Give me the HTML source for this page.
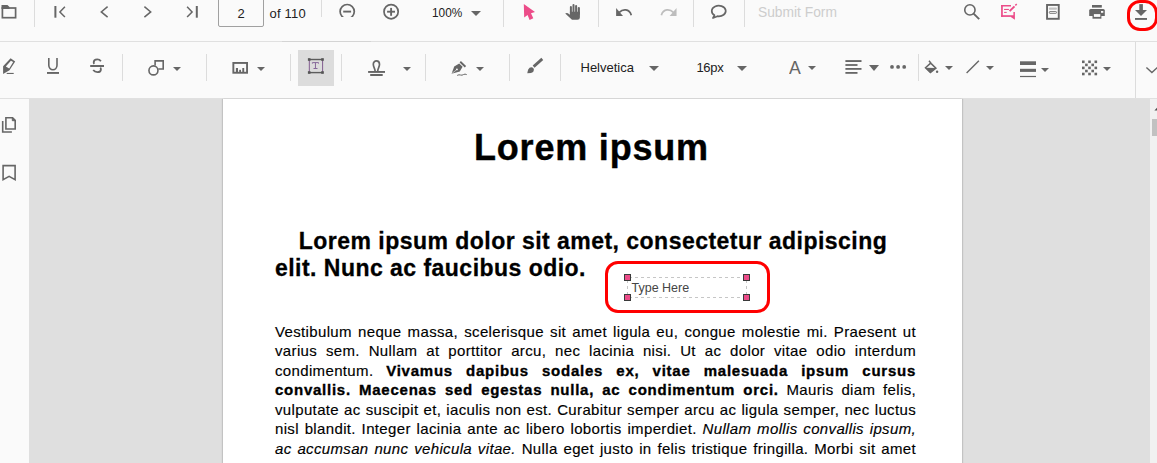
<!DOCTYPE html>
<html><head><meta charset="utf-8">
<style>
html,body{margin:0;padding:0;}
body{width:1157px;height:463px;overflow:hidden;position:relative;background:#fafafa;font-family:"Liberation Sans",sans-serif;}
.a{position:absolute;}
.sep{position:absolute;width:1px;background:#dcdcdc;}
.hl{position:absolute;height:1px;background:#e0e0e0;}
svg{position:absolute;overflow:visible;}
.car{position:absolute;width:0;height:0;border-left:5.5px solid transparent;border-right:5.5px solid transparent;border-top:5.5px solid #666;}
.cars{position:absolute;width:0;height:0;border-left:4.2px solid transparent;border-right:4.2px solid transparent;border-top:4.4px solid #666;}
.tt{position:absolute;white-space:nowrap;color:#212121;font-size:13px;line-height:1;}
#page{position:absolute;left:223px;top:99px;width:739px;height:364px;background:#fff;box-shadow:-1px 0 1px rgba(0,0,0,0.12),1px 0 1px rgba(0,0,0,0.12);}
.pl{position:absolute;left:275px;width:641px;white-space:nowrap;font-size:15px;line-height:19.5px;letter-spacing:0.35px;-webkit-text-stroke:0.15px #000;color:#000;text-align:justify;text-align-last:justify;}
.pl b{letter-spacing:0.75px;-webkit-text-stroke:0.35px #000;}
.pl i{letter-spacing:0.35px;}
</style></head><body>

<!-- toolbar 1 -->
<div class="hl" style="left:0;top:41px;width:1157px;"></div>
<div class="hl" style="left:282px;top:41px;width:89px;background:#d4d4d4;"></div>
<div class="hl" style="left:0;top:98px;width:1157px;"></div>

<svg width="1157" height="463" style="left:0;top:0;" viewBox="0 0 1157 463">
<defs><clipPath id="c17"><rect x="0" y="0" width="1157" height="17"/></clipPath></defs>
<g fill="none" stroke="#666666" stroke-width="1.8">
 <!-- folder -->
 <rect x="2.4" y="8" width="13.2" height="9.7" stroke-width="1.7"/>
 <path d="M1.5,5 H7.5 L9.5,7 V9 H1.5 Z" fill="#666666" stroke="none"/>
 <!-- first -->
 <rect x="54.4" y="6" width="2" height="11.7" fill="#666666" stroke="none"/>
 <polyline points="64.9,6.7 59.9,11.9 64.9,17.1" stroke-width="1.5"/>
 <polyline points="107.6,6.7 101.3,11.9 107.6,17.1" stroke-width="1.5"/>
 <polyline points="144.4,6.7 150.7,11.9 144.4,17.1" stroke-width="1.5"/>
 <polyline points="187.1,6.7 192.1,11.9 187.1,17.1" stroke-width="1.5"/>
 <rect x="195.8" y="6" width="2" height="11.7" fill="#666666" stroke="none"/>
 <!-- zoom out (clipped) -->
 <g clip-path="url(#c17)">
  <circle cx="347.2" cy="11.6" r="7.1" stroke-width="1.7"/>
  <line x1="343.2" y1="11.6" x2="351.1" y2="11.6" stroke-width="1.9"/>
 </g>
 <circle cx="391.1" cy="11.7" r="7.1" stroke-width="1.7"/>
 <line x1="387.1" y1="11.7" x2="395" y2="11.7" stroke-width="1.9"/>
 <line x1="391.1" y1="7.9" x2="391.1" y2="15.8" stroke-width="1.9"/>
 <!-- hand -->
 <g fill="#666666" stroke="none">
  <rect x="569.9" y="6.1" width="2" height="8" rx="1"/>
  <rect x="572.5" y="3.9" width="2" height="10" rx="1"/>
  <rect x="575.1" y="4.9" width="2" height="10" rx="1"/>
  <rect x="577.7" y="7" width="2.2" height="8" rx="1.1"/>
  <path d="M569.9,11.7 H579.9 V17.4 Q579.9,19.8 577.5,19.8 H572 L565.2,13.6 Q566.4,12.5 567.9,13.3 L569.9,14.7 Z"/>
 </g>
 <!-- undo / redo -->
 <g id="undo">
  <polygon points="616.1,8.1 616.1,15.9 623,15.9" fill="#666666" stroke="none"/>
  <path d="M619.3,12.4 C622.6,8.9 629.3,8.4 631.3,15.2" stroke-width="1.7"/>
 </g>
 <g transform="matrix(-1,0,0,1,1292.65,0)" stroke="#bdbdbd">
  <polygon points="616.1,8.1 616.1,15.9 623,15.9" fill="#bdbdbd" stroke="none"/>
  <path d="M619.3,12.4 C622.6,8.9 629.3,8.4 631.3,15.2" stroke-width="1.7"/>
 </g>
 <!-- comment -->
 <path d="M714.5,15.2 A7,5.3 0 1 1 717.5,16.2 L713,18 Z" stroke-width="1.7" stroke-linejoin="round"/>
 <!-- search -->
 <circle cx="969.9" cy="9.9" r="5.15" stroke-width="1.6"/>
 <line x1="973.6" y1="13.6" x2="979.2" y2="19.2" stroke-width="1.9"/>
 <!-- form -->
 <rect x="1047.05" y="4.95" width="11.7" height="13.85" stroke-width="1.9"/>
 <rect x="1048.9" y="7.4" width="8" height="2.4" rx="0.8" fill="#c2c2c2" stroke="none"/>
 <rect x="1049.35" y="11.55" width="7.1" height="1.8" rx="0.6" fill="#fafafa" stroke="#707070" stroke-width="0.9"/>
 <!-- print -->
 <g fill="#666666" stroke="none">
  <rect x="1092" y="5" width="9.8" height="2.6"/>
  <path d="M1090.7,9.1 H1103.3 Q1104.8,9.1 1104.8,10.6 V15.9 H1089.2 V10.6 Q1089.2,9.1 1090.7,9.1 Z"/>
  <rect x="1092.5" y="13" width="8.9" height="5.7"/>
  <rect x="1093.9" y="14.1" width="6.4" height="2.8" fill="#fafafa"/>
  <rect x="1101" y="11" width="2.3" height="1.8" fill="#fafafa"/>
 </g>
 <!-- download -->
 <g fill="#666666" stroke="none">
  <rect x="1139.3" y="4.1" width="3.6" height="6.2"/>
  <polygon points="1135,10.1 1147,10.1 1141,16"/>
  <rect x="1135" y="18" width="12" height="1.9"/>
 </g>
</g>
<!-- pink icons -->
<g fill="#ec4c89" stroke="none">
 <polygon points="523.8,3.9 535,12.1 531,13.2 533.3,18.2 529.6,19.9 527.6,15 524.2,17.5"/>
</g>
<g fill="#ec4c89" stroke="none">
 <rect x="1001.1" y="5" width="9.9" height="1.5"/>
 <rect x="1001.1" y="5" width="1.7" height="11.9"/>
 <rect x="1001.1" y="15.2" width="9.8" height="1.7"/>
 <polygon points="1010.8,15.2 1013.4,15.2 1013.4,12.1 1014.9,12.1 1014.9,19.7 1010.8,16.9"/>
 <rect x="1004.1" y="8.9" width="4.8" height="1.1"/>
 <rect x="1004.1" y="11.9" width="2.6" height="1"/>
 <line x1="1009.6" y1="11.1" x2="1014.5" y2="6.4" stroke="#ec4c89" stroke-width="2"/>
 <line x1="1015.3" y1="5.3" x2="1016.8" y2="4.1" stroke="#ec4c89" stroke-width="1.5"/>
</g>
</svg>

<div class="sep" style="left:34px;top:0;height:27px;"></div>
<div class="a" style="left:218px;top:-5px;width:44px;height:30px;border:1px solid #a0a0a0;border-radius:2px;"></div>
<div class="tt" style="left:237.5px;top:7px;">2</div>
<div class="a" style="left:260px;top:0;width:60px;height:18px;overflow:hidden;"><div class="tt" style="left:9.5px;top:6.6px;letter-spacing:0.2px;">of 110</div></div>
<div class="sep" style="left:321px;top:0;height:17px;"></div>
<div class="tt" style="left:432px;top:6px;font-size:13px;transform:scaleX(0.91);transform-origin:0 0;">100%</div>
<div class="car" style="left:470.5px;top:11px;"></div>
<div class="sep" style="left:503px;top:0;height:27px;"></div>
<div class="sep" style="left:598px;top:0;height:27px;"></div>
<div class="sep" style="left:693px;top:0;height:27px;"></div>
<div class="sep" style="left:744px;top:0;height:27px;"></div>
<div class="tt" style="left:758.2px;top:5px;font-size:14px;color:#cdcdcd;transform:scaleX(0.985);transform-origin:0 0;">Submit Form</div>
<div class="a" style="left:1127px;top:0;width:31px;height:31px;box-sizing:border-box;border:3px solid #f00;border-radius:13px;"></div>


<div class="a" style="left:298px;top:50px;width:36px;height:36px;background:#dcdcdc;"></div>
<div class="sep" style="left:122px;top:54px;height:27px;"></div>
<div class="sep" style="left:206px;top:54px;height:27px;"></div>
<div class="sep" style="left:290px;top:54px;height:27px;"></div>
<div class="sep" style="left:341px;top:54px;height:27px;"></div>
<div class="sep" style="left:425px;top:54px;height:27px;"></div>
<div class="sep" style="left:509px;top:54px;height:27px;"></div>
<div class="sep" style="left:560px;top:54px;height:27px;"></div>
<div class="sep" style="left:918px;top:54px;height:27px;"></div>
<div class="sep" style="left:1135px;top:42px;height:56px;"></div>
<div class="cars" style="left:173.3px;top:66.5px;"></div>
<div class="cars" style="left:257.2px;top:67.0px;"></div>
<div class="cars" style="left:402.8px;top:66.8px;"></div>
<div class="cars" style="left:476.3px;top:66.8px;"></div>
<div class="tt" style="left:580.5px;top:61px;">Helvetica</div>
<div class="car" style="left:648.7px;top:65.8px;"></div>
<div class="tt" style="left:696.4px;top:61.3px;letter-spacing:-0.3px;">16px</div>
<div class="car" style="left:736.5px;top:65.8px;"></div>
<div class="tt" style="left:789px;top:57.8px;font-size:19px;color:#666;transform:scaleX(0.93);transform-origin:0 0;">A</div>
<div class="cars" style="left:807.5px;top:65.8px;"></div>
<div class="a" style="left:869.3px;top:64.7px;width:0;height:0;border-left:5.5px solid transparent;border-right:5.5px solid transparent;border-top:6.3px solid #666;"></div>
<div class="cars" style="left:944.5px;top:65.8px;"></div>
<div class="cars" style="left:985.5px;top:65.8px;"></div>
<div class="cars" style="left:1040.6px;top:67.5px;"></div>
<div class="cars" style="left:1102.5px;top:66.9px;"></div>
<svg width="1157" height="463" style="left:0;top:0;" viewBox="0 0 1157 463">
<g fill="none" stroke="#666666" stroke-width="1.6">
 <!-- highlight -->
 <path d="M3.1,66.2 L10.6,58.3 L15.2,61.5 L9.5,70.3 L3.1,73.9 Z M5.8,66.6 L10.9,60.7 L13.2,62.1 L9.2,68.6 Z" fill="#666666" fill-rule="evenodd" stroke="none"/>
 <rect x="6.7" y="72.9" width="7" height="1.1" fill="#666666" stroke="none"/>
 <!-- underline -->
 <path d="M48.8,57.9 V65.3 A4.1,4.5 0 0 0 57,65.3 V57.9"/>
 <rect x="47" y="72" width="12" height="1.9" fill="#666666" stroke="none"/>
 <!-- strikethrough -->
 <path d="M100.9,61.2 Q99.6,59.4 97.3,59.4 Q93.7,59.4 93.7,62.3 Q93.7,63.3 94.3,63.9" stroke-width="1.8"/>
 <path d="M93.2,70 Q94.7,72.1 97.4,72.1 Q100.9,72.1 100.9,69.4 Q100.9,68.3 100.3,67.7" stroke-width="1.8"/>
 <rect x="90.2" y="65" width="13.8" height="2" fill="#666666" stroke="none"/>
 <!-- shape -->
 <circle cx="153.45" cy="70.4" r="4.5"/>
 <path d="M155.1,65.6 V60.9 H163.2 V69 H158.3"/>
 <!-- measure -->
 <rect x="233.35" y="62.95" width="13.7" height="9.8" stroke-width="1.9"/>
 <g fill="#666666" stroke="none"><rect x="235.9" y="68" width="2.1" height="5"/><rect x="239.2" y="69.8" width="1.8" height="3.2"/><rect x="242.3" y="68" width="1.9" height="5"/></g>
 <!-- free text -->
 <g stroke="none">
  <rect x="308.6" y="58.8" width="14.6" height="1.4" fill="#5c5c5c"/>
  <rect x="308.6" y="71.9" width="14.6" height="1.4" fill="#5c5c5c"/>
  <rect x="308.8" y="59" width="1.1" height="14" fill="#8a6896"/>
  <rect x="322" y="59" width="1.1" height="14" fill="#8a6896"/>
  <rect x="307.9" y="58.2" width="2.6" height="2.6" fill="#555"/>
  <rect x="321.2" y="58.2" width="2.6" height="2.6" fill="#555"/>
  <rect x="307.9" y="71.2" width="2.6" height="2.6" fill="#555"/>
  <rect x="321.2" y="71.2" width="2.6" height="2.6" fill="#555"/>
 </g>
 <path d="M312.4,63.6 V62.6 H318.5 V63.6 M315.45,62.6 V68.4 M313.5,68.5 H317.5" stroke-width="1" stroke="#86689a"/>
 <!-- stamp -->
 <path d="M375.1,71 C375,68.3 373.3,67.2 373.3,64.3 C373.3,62.2 374.7,60.9 376.4,60.9 C378.1,60.9 379.5,62.2 379.5,64.3 C379.5,67.2 377.8,68.3 377.7,71" stroke-width="1.7"/>
 <rect x="368.1" y="71" width="16.9" height="1.9" fill="#666666" stroke="none"/>
 <rect x="370.2" y="74" width="12.5" height="2" fill="#666666" stroke="none"/>
 <!-- signature -->
 <g fill="#666666" stroke="none">
  <path d="M451.6,73.8 L454.2,66.6 L459.2,63.4 L462.6,66.8 L459.8,71.4 Z"/>
  <path d="M459.6,62.4 L460.9,61.1 L466.1,66.1 L464.8,67.4 Z"/>
 </g>
 <circle cx="456.9" cy="69.4" r="0.95" fill="#fafafa" stroke="none"/>
 <line x1="456.3" y1="70" x2="452.2" y2="73.2" stroke="#fafafa" stroke-width="0.6"/>
 <path d="M457.2,75.4 Q459,74.4 460.5,75 Q462,75.6 463.6,74.5 Q465,73.7 466.7,74.6" stroke-width="1"/>
 <!-- brush -->
 <line x1="533.6" y1="66.6" x2="542.3" y2="58.9" stroke-width="2.8"/>
 <path d="M527.3,73.3 Q527.6,71.3 528.3,69.6 Q529.3,67.3 531.3,67.3 Q533.9,67.5 533.9,70.1 Q533.8,72.6 531,73.1 Z" fill="#666666" stroke="none"/>
 <!-- align -->
 <g fill="#666666" stroke="none">
  <rect x="845.4" y="60.1" width="16.1" height="1.9"/>
  <rect x="845.4" y="64.1" width="12.1" height="1.8"/>
  <rect x="845.4" y="68" width="16.1" height="1.8"/>
  <rect x="845.4" y="72" width="12.1" height="1.8"/>
  <circle cx="892" cy="66.9" r="1.9"/>
  <circle cx="898.1" cy="66.9" r="1.9"/>
  <circle cx="904.2" cy="66.9" r="1.9"/>
 </g>
 <!-- fill -->
 <path d="M930.7,63.1 L935.9,68.1 L930.4,72.6 L925.5,67.8 Z M929,60.8 L931.2,63.4" stroke-width="1.5"/>
 <path d="M925.5,67.8 L935.9,68.1 L930.4,72.9 Z" fill="#666666" stroke="none"/>
 <circle cx="937.1" cy="71.8" r="1.2" fill="#666666" stroke="none"/>
 <!-- line -->
 <line x1="966.6" y1="72.9" x2="978.9" y2="60.8" stroke-width="1.4"/>
 <!-- thickness -->
 <g fill="#666666" stroke="none">
  <rect x="1020" y="61.3" width="16" height="3.7"/>
  <rect x="1020" y="68.8" width="16" height="3.1"/>
  <rect x="1020" y="75.9" width="16" height="1.2"/>
 </g>
 <!-- opacity -->
 <g fill="#666666" stroke="none" id="chk">
  <rect x="1082" y="60.5" width="2.6" height="2.6"/><rect x="1088.2" y="60.5" width="2.6" height="2.6"/><rect x="1094.5" y="60.5" width="2.6" height="2.6"/>
  <rect x="1085.1" y="63.6" width="2.6" height="2.6"/><rect x="1091.4" y="63.6" width="2.6" height="2.6"/>
  <rect x="1082" y="66.6" width="2.6" height="2.6"/><rect x="1088.2" y="66.6" width="2.6" height="2.6"/><rect x="1094.5" y="66.6" width="2.6" height="2.6"/>
  <rect x="1085.1" y="69.7" width="2.6" height="2.6"/><rect x="1091.4" y="69.7" width="2.6" height="2.6"/>
  <rect x="1082" y="72.7" width="2.6" height="2.6"/><rect x="1088.2" y="72.7" width="2.6" height="2.6"/><rect x="1094.5" y="72.7" width="2.6" height="2.6"/>
 </g>
 <!-- chevron -->
 <polyline points="1146.4,67.4 1151.9,72.6 1157.4,67.4" stroke-width="1.4"/>
 <!-- sidebar icons -->
 <path d="M5.9,117.8 H12.6 L15.2,120.4 V129 H5.9 Z"/>
 <path d="M12.3,117.8 V120.7 H15.2" fill="#666666" stroke-width="1"/>
 <path d="M2.7,121 V132 H11.9"/>
 <path d="M3.1,165.6 H15.1 V179.6 L9.1,176.3 L3.1,179.6 Z" stroke-linejoin="miter"/>
</g>

</svg>


<!-- sidebar / viewer -->
<div class="a" style="left:29px;top:99px;width:1121px;height:364px;background:#dfdfdf;"></div>
<div class="a" style="left:1150px;top:99px;width:7px;height:364px;background:#f1f1f1;"></div>
<div class="a" style="left:1152px;top:119px;width:5px;height:17px;background:#c1c1c1;"></div>
<svg width="1157" height="463" style="left:0;top:0;"><polygon points="1154.4,110.4 1157.4,107.3 1160.4,110.4" fill="#505050"/></svg>

<div id="page"></div>
<div class="a" style="left:474px;top:130px;font-size:36px;font-weight:bold;line-height:36px;letter-spacing:0.8px;-webkit-text-stroke:0.4px #000;white-space:nowrap;color:#000;">Lorem ipsum</div>
<div class="a" style="left:298.8px;top:228px;font-size:23px;font-weight:bold;line-height:26.6px;letter-spacing:0.47px;-webkit-text-stroke:0.3px #000;white-space:nowrap;color:#000;">Lorem ipsum dolor sit amet, consectetur adipiscing</div>
<div class="a" style="left:275px;top:254.6px;font-size:23px;font-weight:bold;line-height:26.6px;letter-spacing:0.47px;-webkit-text-stroke:0.3px #000;white-space:nowrap;color:#000;">elit. Nunc ac faucibus odio.</div>
<svg width="1157" height="463" style="left:0;top:0;" viewBox="0 0 1157 463"><g stroke="#c6c6c6" stroke-width="1" fill="none" stroke-dasharray="3,3"><line x1="629" y1="277.5" x2="745" y2="277.5"/><line x1="629" y1="297.5" x2="745" y2="297.5"/><line x1="627.5" y1="280" x2="627.5" y2="295"/><line x1="746.5" y1="280" x2="746.5" y2="295"/></g></svg>
<div class="a" style="left:631.5px;top:279.8px;font-size:12.5px;line-height:16px;white-space:nowrap;color:#454545;">Type Here</div>
<div class="a" style="left:623.5px;top:274.3px;width:5px;height:5px;border:1px solid #3a3a3a;background:#ec4c89;"></div>
<div class="a" style="left:743.3px;top:274.3px;width:5px;height:5px;border:1px solid #3a3a3a;background:#ec4c89;"></div>
<div class="a" style="left:623.5px;top:293.7px;width:5px;height:5px;border:1px solid #3a3a3a;background:#ec4c89;"></div>
<div class="a" style="left:743.3px;top:293.7px;width:5px;height:5px;border:1px solid #3a3a3a;background:#ec4c89;"></div>
<div class="a" style="left:605px;top:261px;width:165px;height:52px;box-sizing:border-box;border:3px solid #f00;border-radius:13px;"></div>
<div class="pl" style="top:321.6px;">Vestibulum neque massa, scelerisque sit amet ligula eu, congue molestie mi. Praesent ut</div>
<div class="pl" style="top:341.1px;">varius sem. Nullam at porttitor arcu, nec lacinia nisi. Ut ac dolor vitae odio interdum</div>
<div class="pl" style="top:360.6px;">condimentum. <b>Vivamus dapibus sodales ex, vitae malesuada ipsum cursus</b></div>
<div class="pl" style="top:380.1px;"><b>convallis. Maecenas sed egestas nulla, ac condimentum orci.</b> Mauris diam felis,</div>
<div class="pl" style="top:399.6px;">vulputate ac suscipit et, iaculis non est. Curabitur semper arcu ac ligula semper, nec luctus</div>
<div class="pl" style="top:419.1px;">nisl blandit. Integer lacinia ante ac libero lobortis imperdiet. <i>Nullam mollis convallis ipsum,</i></div>
<div class="pl" style="top:438.6px;"><i>ac accumsan nunc vehicula vitae.</i> Nulla eget justo in felis tristique fringilla. Morbi sit amet</div>


</body></html>
